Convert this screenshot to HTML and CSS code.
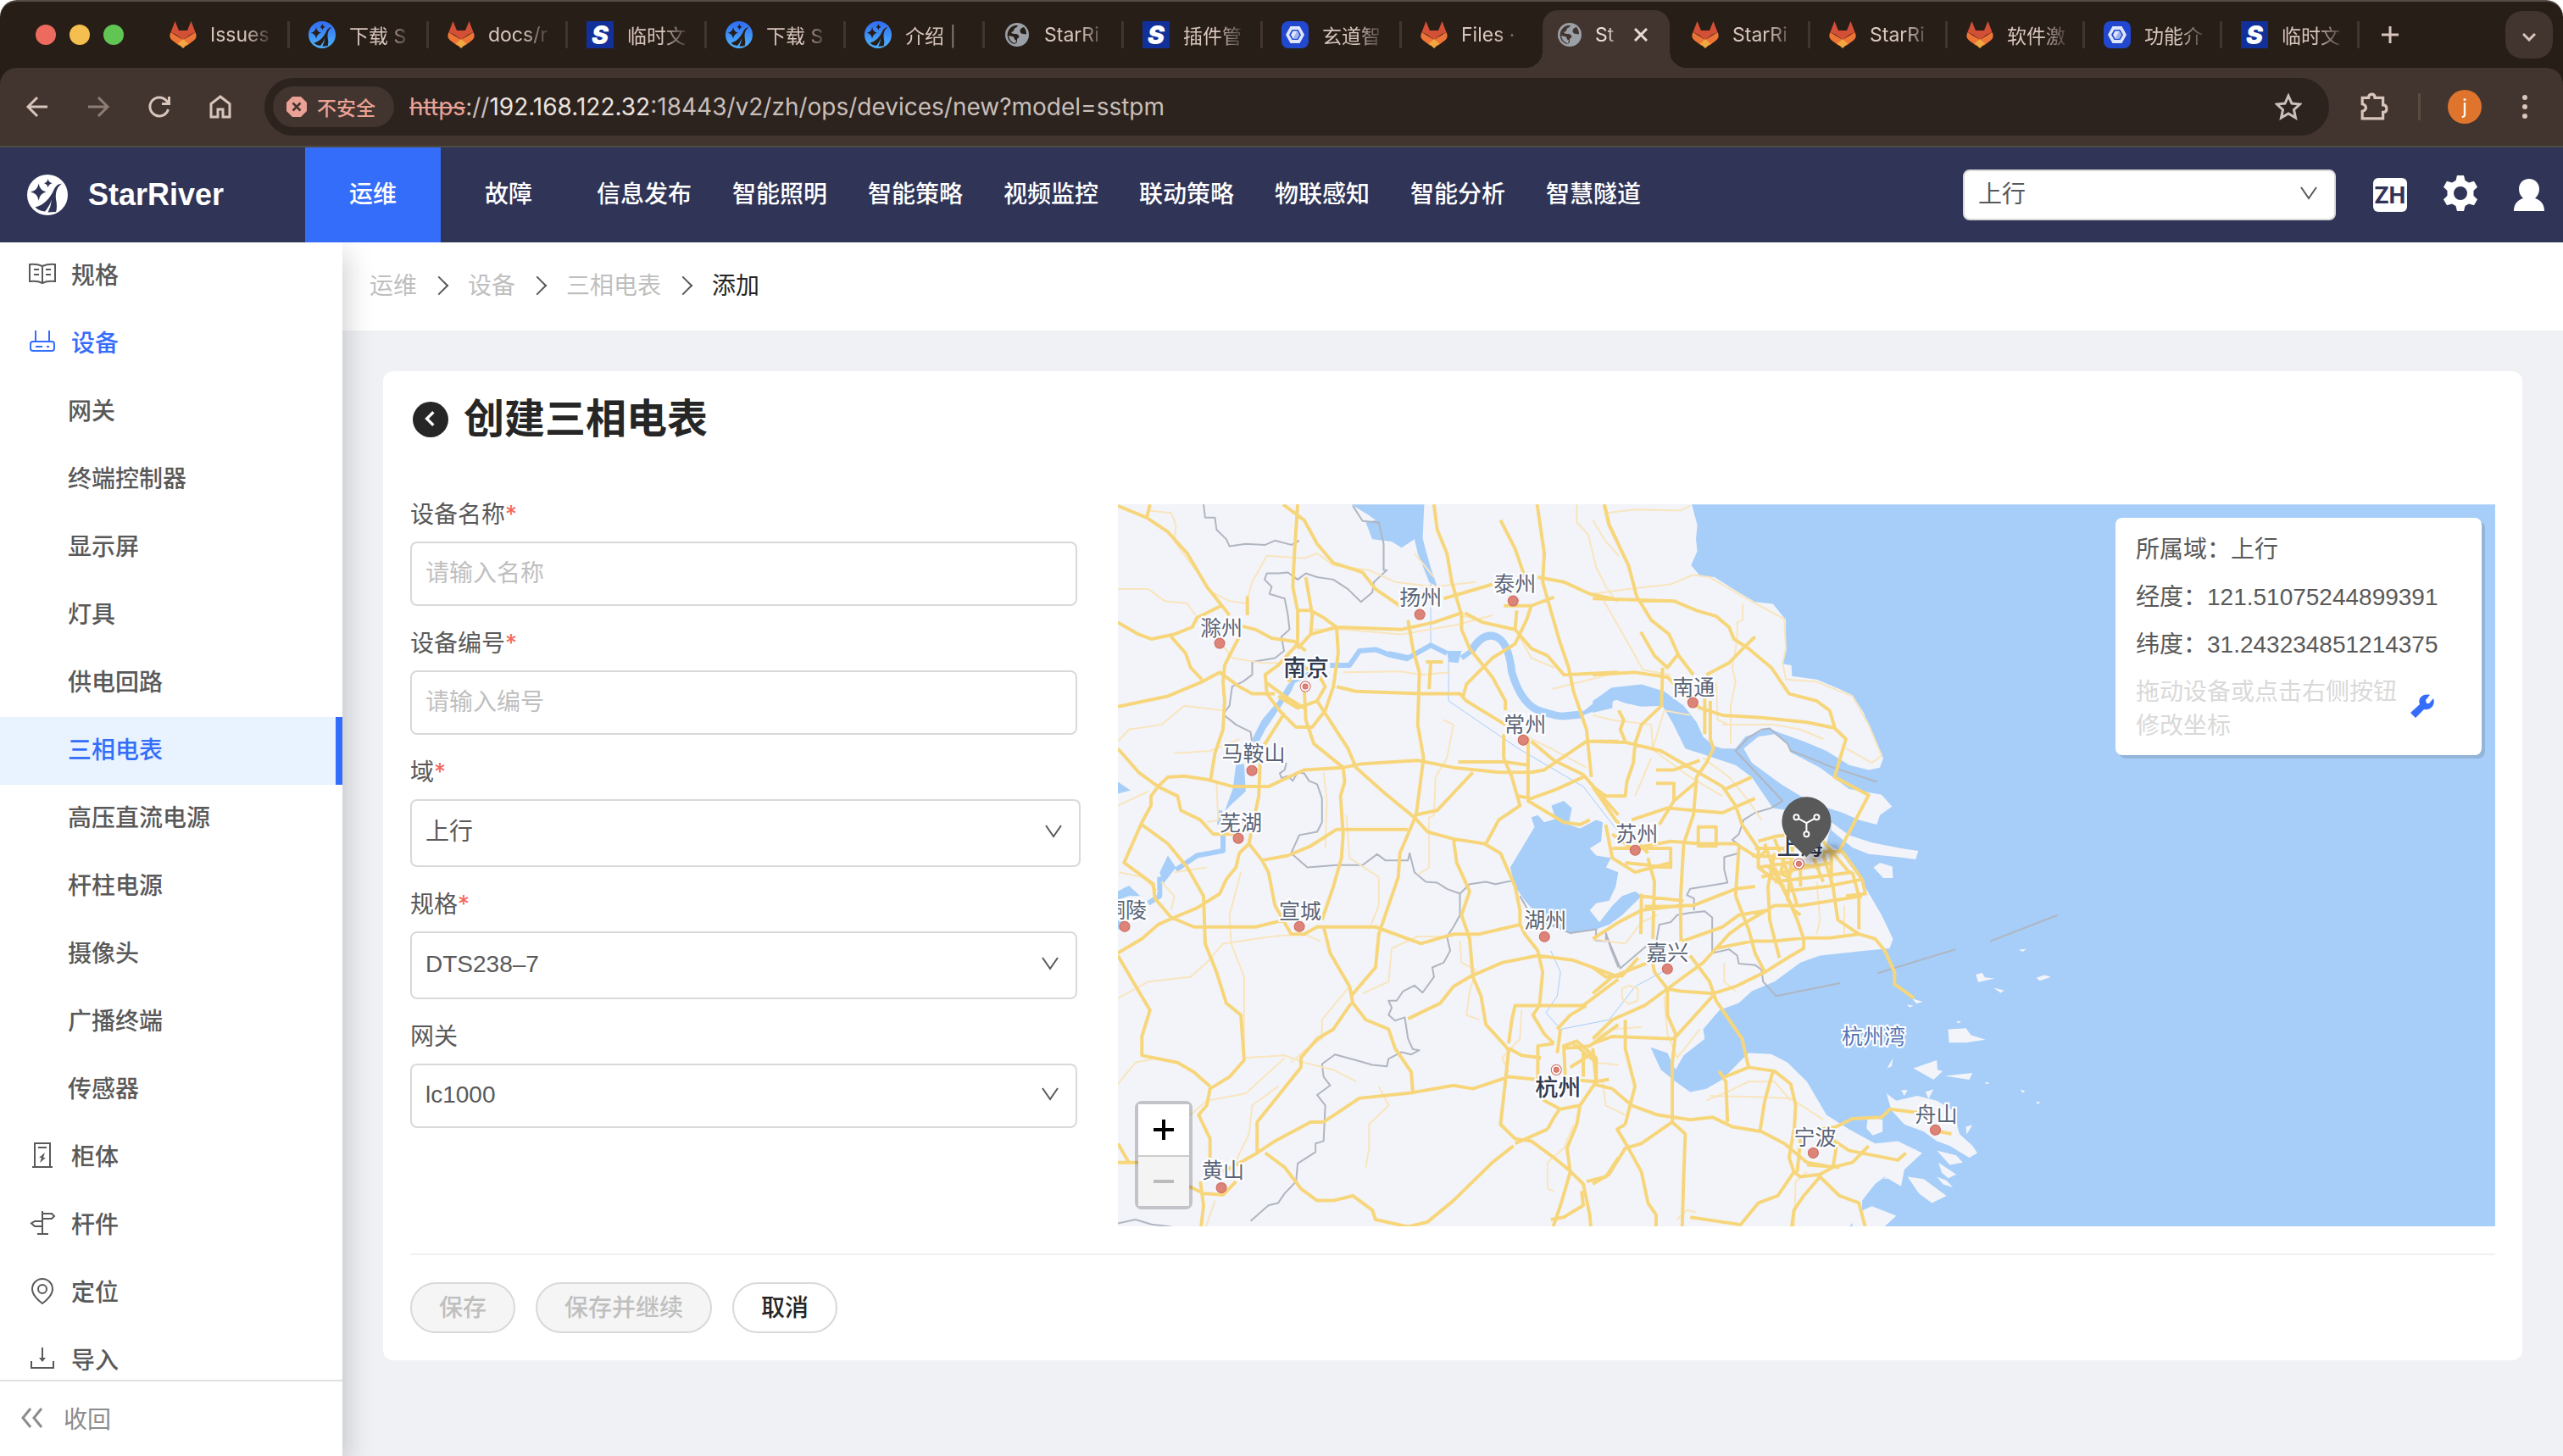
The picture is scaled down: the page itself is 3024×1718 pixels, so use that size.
FILE: index.html
```html
<!DOCTYPE html>
<html lang="zh-CN">
<head>
    <meta charset="UTF-8">
    <title>StarRiver</title>
    <link rel="stylesheet" href="styles.css">
</head>
<body>
    <!-- Shared icons -->
    <svg class="sprite" aria-hidden="true">
        <linearGradient id="sky" x1="0" y1="0" x2="0" y2="1">
            <stop offset="0" stop-color="#2f6bf2"/>
            <stop offset="1" stop-color="#4fb4fb"/>
        </linearGradient>
        <symbol id="fox" viewBox="0 0 32 32">
            <path fill="#ee7535" d="M1.500 13Q-1.500 19 3 22.500L11 28.500h10l8-6Q33.500 19 30.500 13L16 22z"/>
            <path fill="#d35036" d="M6.500 0L11 11h10L25.500 0 30.500 13 24 16 16 22 8 16 1.500 13z"/>
            <path fill="#f0a840" d="M16 21l6 5.500L16 32l-6-5.500z"/>
        </symbol>
        <symbol id="river" viewBox="0 0 48 48">
            <circle cx="24" cy="24" r="24" class="disc"/>
            <path class="cut" d="M13.600 10.500Q15 19 22.500 20.600 15 22 13.600 31 12.300 22 4 20.600 12.300 19 13.600 10.500zM24.600 5Q25.500 9.500 29.500 10.200 25.500 11 24.600 15.500 23.800 11 20 10.200 23.800 9.500 24.600 5zM41 10.800Q35 10.500 31.500 18C27 28 20 36 9.500 38.500Q14 43 21 43.500 26 38 29 29.500 28 38 24.500 44.500L34 44Q36 38 34 29C33 20 36 14 41 10.800z"/>
        </symbol>
        <symbol id="globe" viewBox="0 0 28 28">
            <circle cx="14" cy="14" r="14" fill="#9aa0a6"/>
            <path class="cut" d="M2.500 14Q3 6 11 3l4 0q-1 3-4 3.500-1 4-4 4.500 1 2 5 2 4 0 4.500 4-3 1-2.500 4 0 3-3 4Q3 23 2.500 14zM22 5q-4 1-4.500 4 0 4 4 4l3.500 0.500Q25 8 22 5z"/>
            <path fill="#9aa0a6" d="M4 15l6 1.500 1 3 2 1-1 4q-7-2-8-9.500z"/>
        </symbol>
        <symbol id="hex" viewBox="0 0 32 32">
            <rect width="32" height="32" rx="8" fill="#2148cf"/>
            <path fill="#dfe6fb" fill-rule="evenodd" d="M10.500 6h11L27 16l-5.500 10h-11L5 16zM12.500 10L9 16l3.500 6h7l3.500-6-3.500-6z"/>
            <path fill="#dfe6fb" d="M13.500 11.500h5l2.500 4.500-2.500 4.500h-5L11 16z"/>
            <path fill="#9db2ee" d="M16 16l2.500-4.500L21 16l-2.500 4.500h-5z"/>
        </symbol>
        <symbol id="chevron" viewBox="0 0 24 24">
            <path fill="none" stroke="currentColor" stroke-width="2" d="M3 5l9 13 9-13"/>
        </symbol>
    </svg>

    <div class="chrome">
        <div class="tab-strip">
            <div class="lights"><i class="red"></i><i class="yellow"></i><i class="green"></i></div>
            <div class="tabs">
                <div class="tab"><svg class="fav"><use href="#fox"/></svg><span>Issues</span></div>
                <div class="tab"><svg class="fav blue"><use href="#river"/></svg><span>下载 S</span></div>
                <div class="tab"><svg class="fav"><use href="#fox"/></svg><span>docs/r</span></div>
                <div class="tab"><b class="fav s-logo">S</b><span>临时文</span></div>
                <div class="tab"><svg class="fav blue"><use href="#river"/></svg><span>下载 S</span></div>
                <div class="tab"><svg class="fav blue"><use href="#river"/></svg><span>介绍 |</span></div>
                <div class="tab"><svg class="fav globe"><use href="#globe"/></svg><span>StarRi</span></div>
                <div class="tab"><b class="fav s-logo">S</b><span>插件管</span></div>
                <div class="tab"><svg class="fav"><use href="#hex"/></svg><span>玄道智</span></div>
                <div class="tab last"><svg class="fav"><use href="#fox"/></svg><span>Files ·</span></div>
                <div class="tab active">
                    <svg class="fav globe"><use href="#globe"/></svg><span>St</span>
                    <button class="close" aria-label="关闭"><svg viewBox="0 0 16 16"><path d="M1 1l14 14M15 1L1 15"/></svg></button>
                </div>
                <div class="tab"><svg class="fav"><use href="#fox"/></svg><span>StarRi</span></div>
                <div class="tab"><svg class="fav"><use href="#fox"/></svg><span>StarRi</span></div>
                <div class="tab"><svg class="fav"><use href="#fox"/></svg><span>软件激</span></div>
                <div class="tab"><svg class="fav"><use href="#hex"/></svg><span>功能介</span></div>
                <div class="tab"><b class="fav s-logo">S</b><span>临时文</span></div>
            </div>
            <button class="new-tab" aria-label="新标签页"><svg viewBox="0 0 20 20"><path d="M10 0v20M0 10h20"/></svg></button>
            <button class="tab-search" aria-label="搜索标签页"><svg viewBox="0 0 16 10"><path d="M1 1l7 7 7-7"/></svg></button>
        </div>

        <div class="toolbar">
            <button aria-label="后退"><svg viewBox="0 0 28 28"><path d="M26 14H3M14 3L3 14l11 11"/></svg></button>
            <button class="dim" aria-label="前进"><svg viewBox="0 0 28 28"><path d="M2 14h23M14 3l11 11-11 11"/></svg></button>
            <button aria-label="刷新"><svg viewBox="0 0 28 28"><path d="M24.500 17a11 11 0 1 1-2-10l3 3M25.500 2v8.500H17"/></svg></button>
            <button aria-label="主页"><svg viewBox="0 0 28 28"><path d="M3 10.500L14 2l11 8.500V26h-8v-9h-6v9H3z"/></svg></button>
            <div class="omnibox">
                <div class="unsafe">
                    <svg viewBox="0 0 24 24"><path fill="#eaa196" d="M7 0h10l7 7v10l-7 7H7l-7-7V7z"/><path stroke="#42352f" stroke-width="2.500" d="M7.500 7.500l9 9M16.500 7.500l-9 9"/></svg>
                    <span>不安全</span>
                </div>
                <div class="url"><s>https</s>://<em>192.168.122.32</em>:18443/v2/zh/ops/devices/new?model=sstpm</div>
                <button class="star" aria-label="收藏"><svg viewBox="0 0 32 32"><path d="M16 3l4 9 9.500 1-7 6.500 2 9.500-8.500-5-8.500 5 2-9.500-7-6.500L12 12z"/></svg></button>
            </div>
            <button class="ext" aria-label="扩展程序"><svg viewBox="0 0 32 32"><path d="M3 6h7q0-4 3.500-4T17 6h9v8q4 0 4 4t-4 4v7H3v-8q4-1 4-4t-4-4z"/></svg></button>
            <span class="bar"></span>
            <button class="avatar">j</button>
            <button class="dots" aria-label="菜单"><i></i><i></i><i></i></button>
        </div>
    </div>

    <header class="app-header">
        <a class="brand" href="#"><svg><use href="#river"/></svg>StarRiver</a>
        <nav>
            <a class="active" href="#">运维</a>
            <a href="#">故障</a>
            <a href="#">信息发布</a>
            <a href="#">智能照明</a>
            <a href="#">智能策略</a>
            <a href="#">视频监控</a>
            <a href="#">联动策略</a>
            <a href="#">物联感知</a>
            <a href="#">智能分析</a>
            <a href="#">智慧隧道</a>
        </nav>
        <div class="select domain">
            <select aria-label="域"><option>上行</option></select>
            <svg><use href="#chevron"/></svg>
        </div>
        <button class="lang">ZH</button>
        <button class="gear" aria-label="设置">
            <svg viewBox="0 0 42 42"><path fill="#fff" fill-rule="evenodd" d="M17 0h8l1.500 6 4.500 2.600 6-1.800 4 7-4.500 4.300v5.800L41 28.200l-4 7-6-1.800-4.500 2.600-1.500 6h-8l-1.500-6-4.500-2.600-6 1.800-4-7 4.500-4.300v-5.800L1 13.800l4-7 6 1.800L15.500 6zM21 13a8 8 0 1 0 0 16 8 8 0 0 0 0-16z"/></svg>
        </button>
        <button class="user" aria-label="用户">
            <svg viewBox="0 0 36 38"><path fill="#fff" d="M18 0c7 0 12 5 12 12 0 5-2 8-5 11 6 2 11 6 11 15H0c0-9 5-13 11-15-3-3-5-6-5-11C6 5 11 0 18 0z"/></svg>
        </button>
    </header>

    <div class="layout">
        <aside class="sidebar">
            <ul>
                <li><a href="#"><svg viewBox="0 0 32 32"><path d="M16 7Q9 4 1 5v20q9-1 15 2 6-3 15-2V5q-8-1-15 2v20M6 11h6M6 17h6M20 11h6M20 17h6"/></svg>规格</a></li>
                <li><a class="open" href="#"><svg viewBox="0 0 32 32"><path d="M8 3v13M24 3v13"/><rect x="2" y="16" width="28" height="11" rx="3"/><path d="M8 22h8M21 22h3"/></svg>设备</a></li>
                <li><a class="sub" href="#">网关</a></li>
                <li><a class="sub" href="#">终端控制器</a></li>
                <li><a class="sub" href="#">显示屏</a></li>
                <li><a class="sub" href="#">灯具</a></li>
                <li><a class="sub" href="#">供电回路</a></li>
                <li><a class="sub current" href="#">三相电表</a></li>
                <li><a class="sub" href="#">高压直流电源</a></li>
                <li><a class="sub" href="#">杆柱电源</a></li>
                <li><a class="sub" href="#">摄像头</a></li>
                <li><a class="sub" href="#">广播终端</a></li>
                <li><a class="sub" href="#">传感器</a></li>
                <li><a href="#"><svg viewBox="0 0 32 32"><path d="M7 30V2h18v28M4 30h24M11 7h10"/><path class="solid" d="M19 13l-7 6h3l-2 6 7-6h-3z"/></svg>柜体</a></li>
                <li><a href="#"><svg viewBox="0 0 32 32"><path d="M16 2v27M10 29h13M16 5h11l3 3-3 3H16M16 14H7l-4 2.500L7 20h9"/></svg>杆件</a></li>
                <li><a href="#"><svg viewBox="0 0 32 32"><path d="M16 31C8 25 4 20 4 14a12 12 0 0 1 24 0c0 6-4 11-12 17z"/><circle cx="16" cy="14" r="5"/></svg>定位</a></li>
                <li><a href="#"><svg viewBox="0 0 32 32"><path d="M3 19v8h26v-8M16 3v15"/><path class="solid" d="M12 15h8l-4 5z"/></svg>导入</a></li>
            </ul>
            <button class="collapse"><svg viewBox="0 0 26 26"><path d="M11 2L2 13l9 11M24 2l-9 11 9 11"/></svg>收回</button>
        </aside>

        <main>
            <ol class="breadcrumb">
                <li><a href="#">运维</a></li>
                <li><a href="#">设备</a></li>
                <li><a href="#">三相电表</a></li>
                <li>添加</li>
            </ol>

            <form class="card">
                <div class="title">
                    <button type="button" class="back" aria-label="返回"><svg viewBox="0 0 18 18"><path d="M12 2L5 9l7 7"/></svg></button>
                    <h1>创建三相电表</h1>
                </div>
                <div class="content">
                    <div class="fields">
                        <div class="field">
                            <label for="name">设备名称<b>*</b></label>
                            <input id="name" type="text" placeholder="请输入名称">
                        </div>
                        <div class="field">
                            <label for="code">设备编号<b>*</b></label>
                            <input id="code" type="text" placeholder="请输入编号">
                        </div>
                        <div class="field">
                            <label for="domain">域<b>*</b></label>
                            <div class="select tall wide"><select id="domain"><option>上行</option></select><svg><use href="#chevron"/></svg></div>
                        </div>
                        <div class="field">
                            <label for="spec">规格<b>*</b></label>
                            <div class="select tall"><select id="spec"><option>DTS238–7</option></select><svg><use href="#chevron"/></svg></div>
                        </div>
                        <div class="field">
                            <label for="gateway">网关</label>
                            <div class="select"><select id="gateway"><option>lc1000</option></select><svg><use href="#chevron"/></svg></div>
                        </div>
                    </div>

                    <div class="map">
                        <svg class="tiles" viewBox="0 0 1624 852" preserveAspectRatio="xMinYMin slice">
                            <!-- sea and islands, east half -->
                            <g class="water" transform="translate(560 -15) scale(.3827 .5612)">
                                <path d="M305 27L322 70 318 100 322 125 303 155 330 177 375 180 440 208 500 232 555 236 595 270 593 330 585 362 612 365 614 388 690 395 760 415 800 428 835 465 855 500 895 560 885 580 850 585 790 575 720 545 650 525 580 508 540 497 500 508 470 515 440 540 400 540 375 535 340 515 320 485 280 450 220 420 150 405 60 412 0 440 0 465 60 455 62 435 100 445 150 452 215 450 245 485 285 540 340 552 440 575 490 600 555 665 620 672 700 680 735 700 720 740 760 755 830 820 890 890 925 940 915 960 840 965 700 975 640 990 560 1030 490 1050 450 1075 390 1090 340 1130 345 1150 280 1185 255 1215 230 1180 178 1168 210 1215 255 1240 300 1262 350 1255 400 1235 450 1200 480 1180 550 1182 600 1200 660 1240 720 1310 790 1340 870 1370 940 1365 1015 1390 960 1425 950 1460 900 1440 870 1455 830 1490 830 1515 770 1560H2800V27z"/>
                            </g>
                            <g class="land" transform="translate(560 -15) scale(.3827 .5612)">
                                <path d="M465 540L510 515 560 510 600 530 610 548 700 580 740 600 790 625 890 637 922 662 885 680 875 700 820 690 770 675 700 660 640 640 580 615 530 590 490 570z"/>
                                <path d="M735 695L790 722 860 738 950 750 1003 755 995 773 940 768 850 762 800 748 735 712zM865 790L885 780 923 788 925 812 895 812z"/>
                                <path d="M905 1265L935 1280 1000 1270 1060 1280 1110 1300 1130 1350 1170 1375 1185 1390 1160 1400 1100 1375 1060 1365 1020 1345 960 1330 920 1300zM950 1258l20 0-10 12zM1025 1262l25-6-15 20zM848 1315l45 5 0 25-30 8-20-15zM920 1370l25 12-35-6z"/>
                                <path d="M1150 1335l20-4-18 20zM1060 1385l60 10 20 15-40 5zM1065 1410l55 25-25 8-20-12zM1060 1440l30 8 20 14-30-6zM1000 1380l-50 35-30 0zM945 1420l-50 25 60-5zM970 1440l50 5 70 35-45 15-40-20zM800 1520l60-18 75 20-60 38h-75z"/>
                                <path d="M1095 1130L1150 1128 1165 1142 1210 1152 1150 1158 1098 1158zM988 1212L1060 1195 1062 1215 1078 1218 1050 1236zM1085 1228l85-6-10 14zM1180 1015l20-4 8 10 30 2-50 8zM1235 1043l32 5-10 6zM1367 1022l25-6 20 4-35 8zM1312 963l25-2-12 6zM1120 1113l15 0-8 5zM1318 1256l14 4-8 4zM1365 1283l14 0-8 5zM1207 1242l16 0-8 4zM925 1190l-18 22 14-4zM985 1066l32 6-20 4zM968 1078l20 2-12 4z"/>
                            </g>
                            <!-- rivers and lakes, west half -->
                            <g class="water" transform="translate(-10 -15) scale(.3827 .5612)">
                                <path d="M745 27L800 50 820 60 790 65 810 100 870 105 900 118 940 100 950 130 985 190 1010 200 990 160 965 100 970 27z"/>
                                <path d="M1235 790L1310 705 1300 685 1320 680 1340 695 1375 688 1362 660 1400 650 1425 665 1415 700 1450 708 1500 690 1520 695 1515 735 1480 750 1500 765 1545 770 1530 790 1568 800 1560 830 1540 860 1500 865 1480 880 1510 905 1550 870 1580 850 1620 840 1640 850 1580 890 1540 910 1500 920 1420 928 1340 905 1280 860 1250 830z"/>
                                <path d="M440 520L470 480 520 440 550 405 580 390 560 420 520 460 480 500 450 540zM390 575L415 572 420 630 380 655 355 672 380 625zM860 335L930 345 920 357 870 350zM1040 335L1085 335 1075 360 1045 358zM1455 465L1500 440 1540 415 1568 411V435L1500 460 1440 475z"/>
                                <path d="M26 610L65 628 26 635zM155 800L180 765 205 790 165 825zM26 840L60 828 95 850 60 850 26 858zM26 900h20v20H26z"/>
                                <path class="channel" d="M1115 335Q1150 295 1190 305T1240 380Q1270 450 1330 462T1400 472L1460 468"/>
                                <path class="stream" d="M560 400L630 380M680 365H740L770 335 820 332 870 345M920 350L990 323 1040 340M1085 350L1115 335M205 795L270 765 350 755 350 710M120 865L155 850 155 810M340 670V700"/>
                                <path class="brook" d="M965 100L990 190 990 320M1045 355V440L1260 540 1460 620 1568 715M1360 965L1390 1010 1380 1060 1345 1095 1390 1130M1390 1130L1540 1110 1620 1040 1730 1000"/>
                            </g>
                            <!-- province borders -->
                            <g class="border" transform="translate(-10 -15) scale(.3827 .5612)">
                                <path d="M290 27L295 55 325 55 330 80 360 100 370 115 420 110 480 112 510 103 560 112 585 103M750 30L780 62 830 65 845 110 845 165 855 165 815 190 810 212 775 232 735 205 690 185 640 180 605 172 580 185 550 170 520 172 485 172 478 185 500 200 493 215 540 225 550 260 555 290 530 305 538 335 510 350 440 358 440 385 410 400 378 410 370 450 350 468 390 490 435 505 440 530M545 570L540 585 525 592 530 602 550 598 565 608 580 590 600 592 615 608 640 615 655 645 655 695 640 715 585 722 560 760 610 790 700 785 780 785 825 762 850 775 920 775 925 760 940 800 975 820 1010 822 1040 835 1080 845 1080 890 1060 915 1040 935 1050 965 1030 990 995 1000 1000 1020 965 1053 940 1038 905 1050 885 1070 860 1070 870 1085 860 1100 880 1112 910 1105 920 1150 935 1172 955 1174 930 1183 900 1178 860 1192 855 1208 810 1205 760 1195 695 1183 655 1203 660 1230 680 1248 640 1268 665 1290 660 1365 635 1370 635 1388 580 1412 575 1450 540 1475 520 1495 490 1500 435 1533M1080 845L1110 825 1160 820 1190 825 1240 818M1265 850L1290 880 1340 905 1420 928 1500 920 1498 943 1530 945 1530 928 1545 960 1568 1000M26 1538L80 1530 130 1540 190 1545"/>
                            </g>
                            <g class="border" transform="translate(560 -15) scale(.3827 .5612)">
                                <path d="M40 930L85 1002 165 955 195 950 205 910 240 905 260 890 300 885 345 882 368 895 368 970 420 962 445 975 450 992 500 995 520 1005 525 1030 565 1060 762 1033M878 1012L1118 962M1225 945L1432 890M875 610L740 580 650 555 610 545 600 530 545 498 520 500 480 517 440 545 585 650 550 665 500 675 465 690 450 720 430 732 450 742 450 760 405 768 405 795 415 822 300 835 290 848 312 855 312 880"/>
                            </g>
                            <!-- minor roads -->
                            <g class="minor" transform="translate(-10 -15) scale(.3827 .5612)">
                                <path d="M120 40L190 45 205 70 200 105 260 160 290 185 310 210 370 230 420 235 440 190 485 135 600 140 640 130 690 155 800 165 880 190 1000 200 1130 190M26 205L120 205 170 230 240 235 265 260M26 525L60 500 160 490 230 450 350 460M26 660L120 630M200 550L310 545 400 520M345 320L380 350 470 360 540 360M620 290L720 290 900 300 1070 280 1180 260M720 380L900 378 960 385 1050 380M1440 27V65L1475 90 1500 160 1530 200 1560 230M1260 300L1300 350 1370 370M1365 415L1568 380M1030 480L1060 490 1040 560 1005 600 1000 680 985 685 985 790 950 805M660 590L670 650 665 750M730 680L740 770 830 810 830 870 800 920M330 610L335 690 300 695M26 1245L80 1200 150 1190M26 1065L120 1030 250 1020 300 990 350 950 500 935 600 930 650 945M405 800L370 890 375 950 415 1020V1190L540 1185 600 1200 690 1215 760 1240M740 1040L655 1110 655 1150 600 1175 560 1200M780 1055L860 1030 870 960 950 935 1060 935M790 1420L800 1380 800 1330 860 1290 830 1250M1080 945L1085 990 1130 1005 1110 1050 1100 1100 1140 1110M1270 1090L1265 1150 1210 1190 1230 1220M1430 1330L1400 1380 1350 1410 1350 1465 1370 1470M250 1310L300 1280 420 1265 540 1190M325 1490L310 1520 290 1560M380 1420L430 1350 440 1290 520 1250M160 820L200 850 190 880M200 800L300 790M30 800L100 810 150 840M1240 500L1360 540 1470 580M940 130L1000 180M1080 260L1140 270 1240 290"/>
                            </g>
                            <g class="minor" transform="translate(560 -15) scale(.3827 .5612)">
                                <path d="M0 60L40 105 80 135M0 215L110 205 240 195 310 175 360 180 500 235 590 268 595 330 585 360 595 395 690 400 800 430 850 490 890 555 860 570 780 540M30 225L110 320 155 375 240 385M300 30L270 40 130 38 40 45M462 235V270L445 275 445 310 430 370 440 400 425 450 425 530M380 400L385 480 420 490M0 470L60 480 180 490 185 540 220 460 300 470M340 560L420 600 480 650 520 690M180 540L300 600 400 640M690 820L700 900 690 930M775 870L775 930M405 990V1030L440 1050M220 1060L230 1140 260 1190 330 1130M90 1045L110 1038 140 1045 138 1070 110 1077 90 1065zM0 1150L60 1130 150 1125M0 1200L80 1205M350 1280L420 1260 480 1240 560 1240 610 1280M360 1270L500 1272 610 1275 710 1320M620 1560L625 1450 660 1430M30 1240L40 1290 100 1310M260 1530L290 1510 320 1515M0 940L100 950 150 905 200 890M130 640L180 560M400 490L560 490 640 500 710 520"/>
                            </g>
                            <!-- major roads -->
                            <g class="major" transform="translate(-10 -15) scale(.3827 .5612)">
                                <path d="M26 30L115 55 180 85 240 130 300 200 370 260M115 55L125 27M26 275L90 300 130 310 200 300 255 285 270 265 345 240M190 305L235 340 250 370 285 395M26 452L180 430 285 400 340 380 400 410 440 425 510 425M400 305L355 365 350 400 355 440 350 500 325 550 312 605M425 220V260M410 283L450 290 500 308 570 315 605 335M535 27L600 60 640 110 690 150 780 170 820 205 895 240M580 27L570 130 565 200 580 250 580 320 520 365 480 385 485 425 530 465 575 495 625 495 665 460 690 410 705 340 700 285 660 265 620 250 580 250M605 180L615 220 625 260 620 300 580 330M620 300L700 285 900 290 1000 275 1085 255 1085 290 1110 330 1180 390 1220 440 1220 460M1000 27L1010 80 1040 130 1055 190 1085 260M550 400L600 370 640 380 665 410 640 440 580 455 520 430M480 400L540 430 600 455M540 465L470 540 465 560 460 640 430 740M600 410L605 480 630 530 720 580 725 610 712 640 720 720 715 770 690 830 655 900M640 440L735 540 760 580 850 635 940 685 980 715 1060 730 1155 740 1205 760 1250 830 1265 880 1265 910 1280 930 1320 965 1335 1010 1325 1080 1305 1100 1340 1140 1370 1160M700 410L760 420 960 425 1080 425 1100 440 1220 490M920 270L935 330 955 380 950 490 968 560 945 680 920 720 895 760 890 810 850 890 830 930 820 1000 745 1060M26 540L90 590 150 620 210 640 220 670 280 690 320 720 400 720M150 620L180 600 230 598 300 605 380 620 490 620 600 585 720 580 780 572 950 565 1060 580 1200 590 1300 590 1340 585 1470 525 1568 525M26 1410H90M26 1370L60 1410M150 620L128 640 128 660 100 695 45 780 135 825 140 855 190 895 260 915 450 915 540 900M100 700L180 740 240 790 290 850 295 950 330 1010 360 1075 405 1100 415 1195 370 1230 310 1255 300 1290 275 1310 310 1360 310 1400M26 970L100 940 150 910 200 895 270 875 340 845 360 815 390 790 400 760 430 740 470 775 490 800 510 870 560 930 600 930 640 915 820 915 960 950 1060 930 1140 930 1265 910M470 775L550 765 620 745 700 710 920 710M940 680L1010 670 1120 590M26 975L90 1050 125 1090 100 1145 100 1185 210 1200 260 1220 310 1250M660 915L680 970 740 1040 750 1075 790 1110 860 1130 880 1170 930 1220 935 1265M745 1075L690 1130 640 1150 590 1190 590 1210 520 1270 455 1325 455 1390 350 1430M455 1390L510 1365 620 1325 660 1325 770 1275 935 1263 1060 1248 1120 1255 1230 1230 1310 1235M480 1390L540 1420 590 1465 640 1490 690 1490 750 1480 810 1510 820 1530 920 1545 980 1535 1060 1490 1180 1410 1245 1375M245 1460L290 1475 350 1478 390 1450M280 1450L290 1500 280 1560M1060 730L1070 780 1110 840 1085 890 1110 940 1120 1020 1145 1060 1160 1120 1220 1165 1230 1175 1220 1240 1205 1330 1250 1360 1300 1365 1370 1400 1415 1425 1460 1455 1480 1520 1485 1560M920 1108L1020 1075 1060 1040 1110 1020 1210 990 1320 975 1430 985 1568 1020M1325 1080L1250 1080 1240 1110 1230 1160M1320 1080L1460 1080 1568 1025M1205 60L1250 120 1280 180M1030 225L1080 215 1180 195M1318 27L1325 60 1340 130 1335 190 1385 310 1415 370 1430 420 1470 500 1485 600M1320 180L1400 190 1480 215 1568 228M1215 240L1300 240 1370 222M1300 240L1285 270 1250 320 1180 350 1100 405 1090 430M1095 255L1150 275 1250 290 1300 330 1350 345 1400 385 1568 380M1525 27L1540 70 1568 110M1255 250L1250 290M975 358H1028M990 360L985 415M1215 510L1215 560 1240 600 1265 660 1200 690 1160 740M1290 520L1290 650 1400 695 1450 700 1480 690M1300 525L1370 565 1460 595 1568 680M1260 640L1300 645 1380 625 1460 600M1075 568H1220L1290 575"/>
                                <path d="M1370 1160L1320 1165 1320 1230 1340 1280 1390 1298 1450 1290 1500 1240 1500 1190 1440 1155 1400 1165 1405 1235 1500 1240M1400 1170L1480 1165 1568 1120M1390 1130L1380 1180M1420 1210L1490 1180M1460 1180V1230M1430 1160L1500 1200M1230 1170L1270 1185 1330 1190M1350 1340L1250 1370M1350 1340L1370 1315 1390 1295M1450 1290L1440 1330 1410 1380 1420 1430 1390 1500 1360 1560M1470 1450L1530 1440 1568 1400M1360 1530L1400 1525 1460 1500 1455 1470M1380 1130L1420 1100 1470 1080"/>
                            </g>
                            <g class="major" transform="translate(560 -15) scale(.3827 .5612)">
                                <path d="M35 27L50 70 110 155 135 220 180 270 235 300 265 345 310 385M0 225L250 230 320 250 380 262 420 285 435 310 480 330 550 370 605 425 690 440 730 460 745 495M148 295L190 345 230 370 265 340M350 385L420 360 470 325 500 305M0 385L130 380 230 390 290 430 330 455 400 470 520 475 660 485 745 497 780 520 745 600 850 638 760 755M215 370L212 450 150 490 130 530 125 570 105 610 100 640 40 640 0 620M80 460L95 480 85 500 100 525M0 525L100 527 210 545 300 580 400 620 440 660 460 700 510 750 510 790 590 830M345 435V510M362 440V520L372 540 350 570 320 600 310 680 280 740 270 860 272 945M195 585H250L330 565M195 613H250V650M320 610L250 650 205 700M410 625L490 600M120 690L230 665 310 670 400 675 500 645M40 700L60 770 130 800 240 780M60 720L120 750 240 735 330 740 440 740 510 770 540 750M170 770L190 820 185 940M60 750H240V790L100 780M325 705H380V745H325zM145 850L280 860M150 845L148 930M160 872H280M0 620L70 690 170 760M0 940L80 905 150 880 270 870 310 870 440 835 500 830M0 1000L40 1020 90 1018 140 980M0 1055L60 1020 170 990M0 1150L60 1110 160 1080 230 1045 340 990 420 930 460 910 560 870 640 870 830 850M275 945L400 915 450 890 540 880M230 1045L270 1050 370 1055 440 1040 530 1010 600 980 650 960 650 940 630 900 560 790M180 975L190 1010 230 1045 230 1100 255 1140 245 1200 245 1330M300 975L360 1030 380 1070 460 1150 480 1210M380 960L490 945 560 945 650 938 730 938 820 930M440 850L480 920 500 970 530 1010M540 830L545 900 575 980M450 750L440 850"/>
                                <path d="M510 735L560 725 620 720M510 790L600 780 700 790M520 810L620 795 740 780M530 740L560 800 620 880 640 890M560 730L600 800 630 870M600 730L580 800M620 720L605 820 600 860M560 820L800 800M590 840L720 830 830 815M640 790V830M680 770L710 820M700 740L740 830M735 755V830M710 735L790 800M700 757H770L830 815 840 845 780 850M740 830L755 900 820 930M800 800L820 850 820 920M500 750L620 750M490 765L620 770M540 790L600 810 620 790M560 760L540 830M820 930L870 940 900 965 930 1010 930 1035 990 1065M0 1160L60 1145 250 1150 370 1060M100 1110L100 1170 130 1250 100 1330M0 1170L10 1240 50 1235M0 1245L60 1255 120 1290 200 1310 300 1320 370 1315 430 1335 520 1345 590 1370 660 1410 740 1420M390 1218L410 1240 415 1325M400 1232L480 1210 560 1218 610 1245 625 1290 620 1350M555 1218L530 1280 515 1345M620 1340L605 1400 620 1430 640 1440 700 1435 740 1420 750 1380 700 1340 750 1335 800 1318 890 1315 915 1298 1000 1305M640 1360L630 1430M700 1345L790 1385 940 1405 965 1390M740 1420L800 1410 850 1375M660 1415L760 1420M0 1455L50 1435 100 1380 150 1370 245 1325 285 1350 280 1440 275 1560M100 1330L75 1340 110 1380 150 1430 170 1495 195 1520 195 1560M450 1545L510 1495 570 1480 620 1430M610 1560L620 1510 650 1480 700 1440 760 1480 820 1495 845 1560M300 1525L400 1535 450 1540M1070 1345L1105 1350"/>
                            </g>
                            <g class="city">
                                <text x="122" y="146">滁州</text><circle cx="120" cy="164" r="6"/>
                                <text x="357" y="110">扬州</text><circle cx="356" cy="130" r="6"/>
                                <text x="468" y="94">泰州</text><circle cx="466" cy="114" r="6"/>
                                <text x="480" y="260">常州</text><circle cx="478" cy="278" r="6"/>
                                <text x="160" y="294">马鞍山</text><circle cx="158" cy="314" r="6"/>
                                <text x="145" y="376">芜湖</text><circle cx="142" cy="394" r="6"/>
                                <text x="9" y="479">铜陵</text><circle cx="8" cy="498" r="6"/>
                                <text x="215" y="480">宣城</text><circle cx="214" cy="498" r="6"/>
                                <text x="504" y="491">湖州</text><circle cx="503" cy="510" r="6"/>
                                <text x="124" y="786">黄山</text><circle cx="122" cy="806" r="6"/>
                                <text x="679" y="216">南通</text><circle cx="678" cy="234" r="6"/>
                                <text x="612" y="389">苏州</text><circle cx="610" cy="408" r="6"/>
                                <text x="648" y="529">嘉兴</text><circle cx="648" cy="548" r="6"/>
                                <text x="822" y="747">宁波</text><circle cx="820" cy="765" r="6"/>
                                <text x="965" y="720">舟山</text><circle cx="964" cy="738" r="6"/>
                                <text class="sea" x="891" y="628">杭州湾</text>
                            </g>
                            <g class="city big">
                                <text x="222" y="194">南京</text><circle class="ring" cx="221" cy="215" r="6"/><circle cx="221" cy="215" r="3"/>
                                <text x="519" y="689">杭州</text><circle class="ring" cx="517" cy="667" r="6"/><circle cx="517" cy="667" r="3"/>
                                <text x="804" y="405">上海</text><circle class="ring" cx="803" cy="424" r="6"/><circle cx="803" cy="424" r="3"/>
                            </g>
                            <!-- device marker -->
                            <ellipse class="pin-shadow" cx="830" cy="413" rx="22" ry="7" transform="rotate(-20 830 413)"/>
                            <path class="pin" d="M812 416C798 403 783 391 783 374a29 29 0 0 1 58 0c0 17-15 29-29 42z"/>
                            <g class="pin-icon">
                                <path d="M803 371l9 5 9-5M812 376v10"/>
                                <circle cx="800" cy="369" r="3"/><circle cx="824" cy="369" r="3"/><circle cx="812" cy="389" r="3"/>
                            </g>
                        </svg>
                        <div class="zoom">
                            <button type="button" aria-label="放大"><svg viewBox="0 0 24 24"><path d="M12 0v24M0 12h24"/></svg></button>
                            <button type="button" aria-label="缩小" disabled><svg viewBox="0 0 24 24"><path d="M0 12h24"/></svg></button>
                        </div>
                        <div class="position">
                            <div>所属域：上行</div>
                            <div>经度：121.51075244899391</div>
                            <div>纬度：31.243234851214375</div>
                            <div class="hint">
                                <p>拖动设备或点击右侧按钮修改坐标</p>
                                <button type="button" aria-label="修改坐标"><svg viewBox="0 0 28 28"><path fill="#356dfb" d="M0 22l11-10C8 5 15-1 23 1l-5 6 1 4 3 0 5-6c3 7-3 15-11 13L6 28z"/></svg></button>
                            </div>
                        </div>
                    </div>
                </div>
                <div class="actions">
                    <button type="submit" disabled>保存</button>
                    <button type="submit" disabled>保存并继续</button>
                    <button type="button">取消</button>
                </div>
            </form>
        </main>
    </div>
</body>
</html>
```

FILE: styles.css
```css
* {
    box-sizing: border-box;
}

body {
    margin: 0;
    height: 100vh;
    display: flex;
    flex-direction: column;
    overflow: hidden;
    background: #fff;
    color: #595959;
    font-family: 'Liberation Sans', 'Noto Sans CJK SC', sans-serif;
    font-size: 28px;
}

button, input, select {
    font: inherit;
    color: inherit;
}

button {
    border: none;
    background: none;
    padding: 0;
    cursor: pointer;
}

a {
    color: inherit;
    text-decoration: none;
}

ul, ol {
    list-style: none;
    margin: 0;
    padding: 0;
}

.sprite {
    position: absolute;
    width: 0;
    height: 0;
}

.disc {
    fill: var(--disc, #fff);
}

.cut {
    fill: var(--cut, #303457);
}

/* Browser tabs */
.chrome {
    --cut: #271e18;
    flex: none;
    border-top: 2px solid #554c47;
    border-radius: 20px 20px 0 0;
    background: #271e18;
    color: #d8c5bc;
    font-family: Inter, 'Noto Sans CJK SC', sans-serif;
}

.tab-strip {
    display: flex;
    align-items: center;
    height: 78px;
    padding-left: 42px;
    padding-right: 12px;
    font-size: 23px;
}

.lights {
    display: flex;
    gap: 16px;
    width: 136px;
}

.lights i {
    width: 24px;
    height: 24px;
    border-radius: 50%;
}

.red { background: #ed6a5e; }
.yellow { background: #f5bf4f; }
.green { background: #61c554; }

.tabs {
    display: flex;
}

.tab {
    position: relative;
    display: flex;
    align-items: center;
    width: 164px;
    height: 78px;
    padding-left: 22px;
    gap: 16px;
}

.tab::after {
    content: '';
    position: absolute;
    right: 0;
    width: 3px;
    height: 32px;
    background: #42352f;
}

.tab.last::after {
    display: none;
}

.tab span {
    width: 76px;
    overflow: hidden;
    white-space: nowrap;
    mask-image: linear-gradient(90deg, #000 55%, transparent);
}

.fav {
    flex: none;
    width: 32px;
    height: 32px;
}

.fav.globe {
    width: 28px;
    height: 28px;
    margin: 0 2px;
}

.fav.blue {
    --disc: url(#sky);
}

.s-logo {
    background: #12309a;
    color: #fff;
    font-size: 30px;
    line-height: 32px;
    font-style: italic;
    font-weight: 900;
    text-align: center;
}

.tab.active {
    --cut: #42352f;
    width: 150px;
    height: 68px;
    margin: 0 4px 0 2px;
    padding: 0 0 10px 16px;
    gap: 14px;
    align-self: flex-end;
    border-radius: 18px 18px 0 0;
    background: #42352f;
    color: #e8dcd6;
}

/* curved feet of the open tab */
.tab.active::before, .tab.active::after {
    content: '';
    position: absolute;
    bottom: 0;
    left: -20px;
    width: 20px;
    height: 20px;
    background: radial-gradient(circle at 0 0, transparent 20px, #42352f 20px);
}

.tab.active::after {
    left: 100%;
    background: radial-gradient(circle at 100% 0, transparent 20px, #42352f 20px);
}

.tab.active ~ .tab {
    width: 162px;
}

.tab.active span {
    width: 28px;
}

.close {
    display: flex;
    margin-left: 4px;
}

.close svg {
    width: 16px;
    height: 16px;
}

.close svg, .new-tab svg, .tab-search svg, .toolbar > button svg, .star svg {
    fill: none;
    stroke: currentColor;
    stroke-width: 3;
}

.new-tab {
    margin-left: 26px;
    display: flex;
}

.new-tab svg {
    width: 20px;
    height: 20px;
}

.tab-search {
    width: 56px;
    height: 56px;
    margin-left: auto;
    border-radius: 20px;
    background: #42352f;
}

.tab-search svg {
    width: 16px;
    height: 10px;
}

/* Browser toolbar */
.toolbar {
    display: flex;
    align-items: center;
    height: 94px;
    padding: 0 36px 0 30px;
    border-bottom: 2px solid #4c4b45;
    border-radius: 20px 20px 0 0;
    background: #42352f;
}

.toolbar > button {
    display: flex;
    margin-right: 44px;
}

.toolbar > button svg {
    width: 28px;
    height: 28px;
}

.toolbar .dim {
    opacity: .5;
}

.omnibox {
    flex: 1;
    display: flex;
    align-items: center;
    height: 68px;
    margin-left: -6px;
    padding: 0 32px 0 10px;
    border-radius: 34px;
    background: #2c231e;
}

.unsafe {
    display: flex;
    align-items: center;
    gap: 12px;
    height: 48px;
    padding: 0 22px 0 16px;
    border-radius: 24px;
    background: #42352f;
    color: #eaa196;
    font-size: 23px;
    font-weight: 500;
}

.unsafe svg {
    width: 24px;
    height: 24px;
}

.url {
    flex: 1;
    margin-left: 18px;
    color: #c9bfba;
}

.url s {
    color: #eaa196;
}

.url em {
    color: #ece3df;
    font-style: normal;
}

.star {
    display: flex;
    color: #c9c0bc;
}

.star svg {
    width: 32px;
    height: 32px;
}

.toolbar > .ext {
    margin: 0 0 0 36px;
}

.toolbar > .ext svg {
    width: 34px;
    height: 34px;
}

.bar {
    width: 3px;
    height: 32px;
    margin: 0 32px 0 35px;
    background: #5b4c42;
}

.toolbar > .avatar {
    width: 40px;
    height: 40px;
    margin: 0;
    align-items: center;
    justify-content: center;
    border-radius: 50%;
    background: #df742d;
    color: #fff;
    font-size: 23px;
}

.toolbar > .dots {
    flex-direction: column;
    gap: 5px;
    margin: 0 6px 0 48px;
}

.dots i {
    width: 6px;
    height: 6px;
    border-radius: 50%;
    background: #d8c5bc;
}

/* App header */
.app-header {
    flex: none;
    display: flex;
    align-items: center;
    height: 112px;
    padding-right: 22px;
    background: #303457;
    color: #fff;
}

.brand {
    display: flex;
    align-items: center;
    gap: 24px;
    width: 360px;
    padding-left: 32px;
    font-size: 36px;
    line-height: 40px;
    font-weight: bold;
}

.brand svg {
    width: 48px;
    height: 48px;
}

.app-header nav {
    display: flex;
    flex: 1;
}

.app-header nav a {
    width: 160px;
    line-height: 112px;
    text-align: center;
    font-weight: 500;
}

.app-header nav .active {
    background: #356dfb;
}

.select {
    position: relative;
    display: flex;
    color: #595959;
}

.select select, .field input {
    width: 100%;
    height: 76px;
    padding: 0 16px;
    border: 2px solid #d9d9d9;
    border-radius: 8px;
    background: #fff;
    appearance: none;
}

.select svg {
    position: absolute;
    right: 20px;
    top: calc(50% - 14px);
    width: 24px;
    height: 24px;
    pointer-events: none;
}

.select.domain {
    width: 440px;
    margin-right: 44px;
}

.domain select {
    height: 60px;
    padding-bottom: 2px;
}

.lang {
    width: 40px;
    height: 40px;
    border-radius: 6px;
    background: #fff;
    color: #303457;
    font-family: Roboto, sans-serif;
    font-weight: bold;
}

.gear {
    display: flex;
    margin: 0 42px 4px;
}

.gear svg {
    width: 42px;
    height: 42px;
}

.user {
    display: flex;
}

.user svg {
    width: 36px;
    height: 38px;
}

/* Sidebar */
.layout {
    flex: 1;
    display: flex;
    min-height: 0;
}

.sidebar {
    z-index: 1;
    display: flex;
    flex-direction: column;
    width: 404px;
    background: #fff;
    box-shadow: 4px 12px 32px rgba(0, 0, 0, .2);
    clip-path: inset(0 -60px 0 0);
}

.sidebar ul {
    flex: 1;
    min-height: 0;
    overflow: hidden;
}

.sidebar a {
    display: flex;
    align-items: center;
    gap: 18px;
    height: 80px;
    padding: 0 0 6px 34px;
    font-weight: 500;
}

.sidebar svg {
    width: 32px;
    height: 32px;
    fill: none;
    stroke: currentColor;
    stroke-width: 2;
}

.sidebar .solid {
    fill: currentColor;
    stroke: none;
}

.sidebar .open, .sidebar .current {
    color: #356dfb;
}

.sidebar .sub {
    padding-left: 80px;
}

.sidebar .current {
    border-right: 8px solid #356dfb;
    background: #e8f3ff;
}

.collapse {
    flex: none;
    display: flex;
    align-items: center;
    gap: 24px;
    height: 90px;
    padding: 0 0 2px 25px;
    border-top: 2px solid #e0e0e0;
    color: #8c8c8c;
}

.collapse svg {
    width: 26px;
    height: 26px;
    stroke-width: 3;
}

/* Main */
main {
    flex: 1;
    background: #f0f1f5;
}

.breadcrumb {
    display: flex;
    height: 104px;
    padding-left: 32px;
    background: #fff;
    color: #262626;
    line-height: 104px;
}

.breadcrumb li {
    display: flex;
    align-items: center;
}

.breadcrumb a {
    color: #bfbfbf;
}

.breadcrumb li + li::before {
    content: '';
    width: 14px;
    height: 14px;
    margin: 0 26px 2px 18px;
    border: solid #595959;
    border-width: 2px 2px 0 0;
    transform: rotate(45deg);
}

.card {
    margin: 48px;
    padding: 32px;
    border-radius: 12px;
    background: #fff;
}

.title {
    display: flex;
    align-items: center;
    gap: 18px;
    height: 49px;
    margin: 0 0 66px 3px;
}

.title h1 {
    margin: 0;
    color: #262626;
    font-size: 48px;
    line-height: 48px;
}

.back {
    width: 42px;
    height: 42px;
    border-radius: 50%;
    background: #262626;
}

.back svg {
    width: 20px;
    height: 20px;
    fill: none;
    stroke: #fff;
    stroke-width: 3;
}

.content {
    display: grid;
    grid-template-columns: 32% 1fr;
    gap: 48px;
}

.field {
    margin-bottom: 22px;
}

.field label {
    display: block;
    margin-bottom: 8px;
    line-height: 46px;
}

.field label b {
    color: #f5675b;
    font-family: Inter, sans-serif;
    font-weight: normal;
    line-height: 1;
}

.field input {
    display: block;
}

.field input::placeholder {
    color: #bfbfbf;
}

.field select {
    padding-bottom: 4px;
}

.tall select {
    height: 80px;
}

.wide {
    margin-right: -4px;
}

.actions {
    display: flex;
    gap: 24px;
    margin-top: 32px;
    padding-top: 32px;
    border-top: 2px solid #f0f0f0;
}

.actions button {
    height: 60px;
    padding: 0 32px 4px;
    border: 2px solid #d9d9d9;
    border-radius: 30px;
    background: #fff;
    color: #262626;
    font-weight: 500;
}

.actions button:disabled {
    background: #f5f5f5;
    color: #bfbfbf;
}

/* Map */
.map {
    position: relative;
    height: 852px;
    margin-top: 10px;
    overflow: hidden;
    background: #f2f4fa;
}

.tiles {
    display: block;
    width: 100%;
    height: 100%;
}

.tiles path {
    vector-effect: non-scaling-stroke;
    stroke-linejoin: round;
}

.water path {
    fill: #a7cef8;
}

.water .channel, .water .stream, .water .brook {
    fill: none;
    stroke: #a7cef8;
    stroke-width: 6;
}

.water .channel {
    stroke-width: 9;
}

.water .brook {
    stroke-width: 1;
}

.land path {
    fill: #f2f4fa;
}

.border path, .minor path, .major path {
    fill: none;
    stroke: #b0b5c0;
    stroke-width: 2;
}

.minor path {
    stroke: #f9e5bd;
}

.major path {
    stroke: #f7d67b;
    stroke-width: 4;
}

.city text {
    fill: #5a6478;
    stroke: #fff;
    stroke-width: 4px;
    paint-order: stroke;
    font-size: 25px;
    text-anchor: middle;
    dominant-baseline: central;
}

.city .sea {
    fill: #5576b5;
}

.city circle {
    fill: #db8477;
    stroke: #d0675c;
}

.big text {
    fill: #2f3a50;
    font-size: 27px;
    font-weight: 500;
}

.city .ring {
    fill: #fff;
}

.pin {
    fill: #595959;
}

.pin-shadow {
    fill: rgba(0, 0, 0, .35);
    filter: blur(4px);
}

.pin-icon {
    fill: none;
    stroke: #fff;
    stroke-width: 2;
}

.zoom {
    position: absolute;
    left: 20px;
    bottom: 20px;
    border: 4px solid rgba(0, 0, 0, .2);
    border-radius: 8px;
}

.zoom button {
    display: flex;
    align-items: center;
    justify-content: center;
    width: 60px;
    height: 60px;
    background: #fff;
    color: #000;
}

.zoom button:disabled {
    border-top: 2px solid #ccc;
    background: #f4f4f4;
    color: #bbb;
}

.zoom svg {
    width: 24px;
    height: 24px;
    stroke: currentColor;
    stroke-width: 4;
}

.position {
    position: absolute;
    top: 16px;
    right: 16px;
    width: 432px;
    height: 280px;
    padding: 10px 24px;
    border-radius: 8px;
    background: #fff;
    box-shadow: 4px 4px 0 rgba(0, 0, 0, .12);
    line-height: 56px;
}

.hint {
    display: flex;
    align-items: center;
    gap: 14px;
    color: #d9d9d9;
    line-height: 40px;
}

.hint p {
    width: 310px;
    margin: 8px 0 0;
}

.hint button {
    display: flex;
}

.hint svg {
    width: 28px;
    height: 28px;
}
```
